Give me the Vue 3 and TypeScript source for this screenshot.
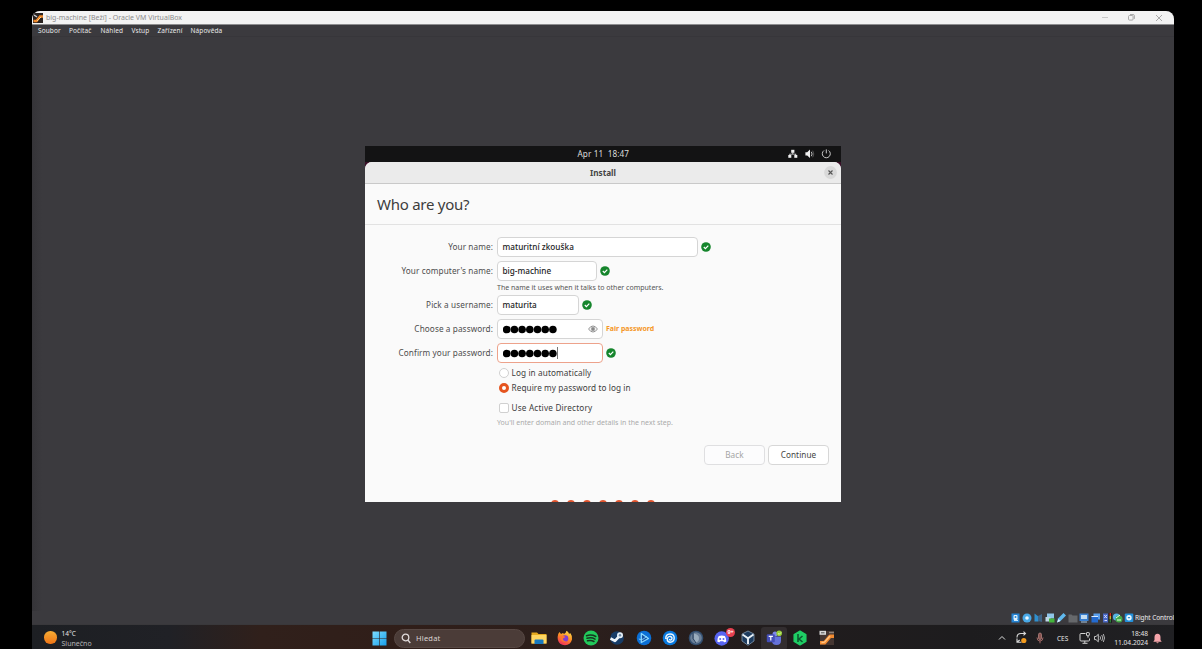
<script setup lang="ts">
const menu: { label: string; width: number }[] = [
  { label: 'Soubor', width: 31 },
  { label: 'Počítač', width: 31.5 },
  { label: 'Náhled', width: 31 },
  { label: 'Vstup', width: 26 },
  { label: 'Zařízení', width: 33 },
  { label: 'Nápověda', width: 40 },
]
const progressDots = [0, 1, 2, 3, 4, 5, 6]
const bullets = [0, 1, 2, 3, 4, 5, 6]
</script>

<template>
  <div class="screen">
    <div class="window">
      <header class="titlebar">
        <svg class="app-icon" width="10" height="10" viewBox="0 0 10 10">
          <rect width="10" height="10" fill="#2a2321" />
          <path d="M.5 8h3L7 3.5h3" stroke="#f08a2c" stroke-width="2.4" fill="none" />
          <path d="M1 2l3 2" stroke="#c8cdd2" stroke-width="1.5" />
          <path d="M4 8l4-4" stroke="#ffd08a" stroke-width="1" />
        </svg>
        <span class="title">big-machine [Beží] - Oracle VM VirtualBox</span>
        <svg class="win-controls" width="64" height="12" viewBox="0 0 64 12" fill="none" stroke="#a2a2a2" stroke-width="0.9">
          <path d="M0 5.5h6" stroke="#c4c4c4" />
          <rect x="26.5" y="3.5" width="4.6" height="4.6" rx="1" />
          <path d="M28 2.5h3q1.4 0 1.4 1.4v3" />
          <path d="M54 3l6 6M60 3l-6 6" />
        </svg>
      </header>
      <nav class="menubar">
        <span v-for="m in menu" :key="m.label" :style="{ width: m.width + 'px' }">{{ m.label }}</span>
      </nav>

      <main class="stage">
        <section class="vm">
          <div class="topbar">
            <span class="clock">Apr 11&nbsp; 18:47</span>
            <svg class="sys" width="44" height="10" viewBox="0 0 44 10">
              <g fill="#f0f0f0">
                <rect x="3.2" y="0.8" width="3.2" height="3" />
                <rect x="0.3" y="6" width="3" height="2.8" />
                <rect x="6.3" y="6" width="3" height="2.8" />
                <path d="M4.4 3.5h.8v1.2h3v1.5h-.8v-.7H2.2v.7h-.8V4.7h3z" />
                <path d="M17.4 3.2h1.8L22 .6v8.4L19.2 6.6h-1.8z" />
              </g>
              <path d="M23.3 2.8q1.6 2.2 0 4.4" stroke="#d5d5d5" fill="none" stroke-width=".9" />
              <path d="M24.7 1.7q2.2 3.3 0 6.6" stroke="#666" fill="none" stroke-width=".8" />
              <path d="M36 1.500a4 4 0 1 0 4.600 0M38.300 .4v4" stroke="#c9c9c9" fill="none" stroke-width="1" />
            </svg>
          </div>
          <div class="dialog">
            <div class="dialog-head">
              <span>Install</span>
              <svg class="close" width="13" height="13" viewBox="0 0 13 13">
                <circle cx="6.5" cy="6.5" r="6.4" fill="#d9d9d9" />
                <path d="M4.5 4.5l4 4M8.5 4.5l-4 4" stroke="#555" stroke-width="1.1" />
              </svg>
            </div>
            <h1><span>Who are you?</span></h1>
            <div class="form">
              <div class="row">
                <label>Your name:</label>
                <div class="field f-name"><span>maturitní zkouška</span></div>
                <svg class="ok" viewBox="0 0 10 10"><circle cx="5" cy="5" r="4.8" fill="#15852c" /><path d="M2.8 5l1.6 1.6 2.9-3" /></svg>
              </div>
              <div class="row">
                <label>Your computer's name:</label>
                <div class="field f-comp"><span>big-machine</span></div>
                <svg class="ok" viewBox="0 0 10 10"><circle cx="5" cy="5" r="4.8" fill="#15852c" /><path d="M2.8 5l1.6 1.6 2.9-3" /></svg>
              </div>
              <p class="help">The name it uses when it talks to other computers.</p>
              <div class="row">
                <label>Pick a username:</label>
                <div class="field f-user"><span>maturita</span></div>
                <svg class="ok" viewBox="0 0 10 10"><circle cx="5" cy="5" r="4.8" fill="#15852c" /><path d="M2.8 5l1.6 1.6 2.9-3" /></svg>
              </div>
              <div class="row">
                <label>Choose a password:</label>
                <div class="field f-pass">
                  <svg class="bullets" width="55" height="10" viewBox="0 0 55 10"><circle v-for="b in bullets" :key="b" :cx="3.7 + b * 7.7" cy="5.5" r="3.8" /></svg>
                  <svg class="eye" width="10" height="8" viewBox="0 0 10 8" fill="none" stroke="#858585">
                    <path d="M.6 4Q2.4 1 5 1t4.400 3Q7.6 7 5 7T.6 4z" stroke-width=".9" />
                    <circle cx="5" cy="4" r="1.9" fill="#888" stroke="#aaa" stroke-width=".6" />
                  </svg>
                </div>
                <span class="fair">Fair password</span>
              </div>
              <div class="row">
                <label>Confirm your password:</label>
                <div class="field f-pass focus">
                  <svg class="bullets" width="55" height="10" viewBox="0 0 55 10"><circle v-for="b in bullets" :key="b" :cx="3.7 + b * 7.7" cy="5.5" r="3.8" /></svg><i class="caret"></i>
                </div>
                <svg class="ok" viewBox="0 0 10 10"><circle cx="5" cy="5" r="4.8" fill="#15852c" /><path d="M2.8 5l1.6 1.6 2.9-3" /></svg>
              </div>
              <div class="option"><i class="radio"></i><span class="o-auto">Log in automatically</span></div>
              <div class="option"><i class="radio on"></i><span class="o-req">Require my password to log in</span></div>
              <div class="option ad"><i class="check"></i><span class="o-ad">Use Active Directory</span></div>
              <p class="hint">You'll enter domain and other details in the next step.</p>
            </div>
            <div class="buttons">
              <button class="back">Back</button>
              <button>Continue</button>
            </div>
            <div class="dots"><i v-for="d in progressDots" :key="d"></i></div>
          </div>
        </section>
      </main>

      <div class="statusbar">
        <svg width="127" height="12" viewBox="0 0 127 12">
          <rect x="1.5" y="1.5" width="8" height="9" fill="#2584d4" /><rect x="3.5" y="3" width="4" height="5" rx="1" fill="#e6f4fb" /><circle cx="5.5" cy="5" r="1" fill="#2584d4" /><path d="M4 8.5h4" stroke="#cceaff" />
          <circle cx="17" cy="6" r="4.5" fill="#49a9e7" /><circle cx="17" cy="6" r="1.8" fill="#eaf7ff" />
          <path d="M24.5 1.5l4 3v5h-4z" fill="#2f8fce" /><path d="M28 4l4-2v8l-4-1z" fill="#3f6588" />
          <rect x="37" y="1.5" width="7" height="5" fill="#8fc6e8" /><rect x="35.5" y="5" width="5" height="4.5" fill="#bcd7e6" /><path d="M39 6.5h5.500v4H39z" fill="#44b53c" />
          <path d="M47 10.5l1-4L53.5 1l2.5 2.5-5.500 5.500z" fill="#60b9ee" /><path d="M47 10.5l1.5-3.5 2 2z" fill="#e1f3ff" />
          <path d="M58.5 2.5h3l1 1h5v7h-9z" fill="#66686b" />
          <rect x="69.5" y="1.5" width="9" height="7.5" fill="#397fd0" /><rect x="71" y="3" width="6" height="4" fill="#c3dcf2" /><path d="M71 10h6" stroke="#a5c8e8" />
          <rect x="83.5" y="1.5" width="6.5" height="6" fill="#5a9fed" /><rect x="81.5" y="4" width="6.5" height="6.5" fill="#246bd1" /><path d="M81.5 4.5H88" stroke="#d9eaff" />
          <rect x="93" y="1.5" width="5" height="9" fill="#4a68c4" /><path d="M94.3 3l2.5 3M96.8 3l-2.5 3M94.5 8.5h2.5" stroke="#d5dcff" />
          <rect x="98.7" y="1" width="3.2" height="9.8" fill="#151515" />
          <rect x="99.5" y="1" width="1.6" height="3" fill="#d62b20" /><rect x="99.5" y="4" width="1.6" height="3.5" fill="#c9a72a" /><rect x="99.5" y="7.5" width="1.6" height="3" fill="#287b35" />
          <circle cx="106.5" cy="5" r="3.6" fill="#55b3e6" /><circle cx="109" cy="7" r="3.5" fill="#43ab48" /><path d="M106 6l4-3M107 8h4" stroke="#e4ffe4" />
          <rect x="114.8" y="1.5" width="8.5" height="8.5" rx="1" fill="#2491dc" /><circle cx="119" cy="5.7" r="2.7" fill="#ebf8ff" /><path d="M117.6 5h2.8l-1.4 1.800z" fill="#2482c8" />
        </svg>
        <span>Right Control</span>
      </div>

      <footer class="taskbar">
        <div class="weather">
          <i class="sun"></i>
          <div class="wtext"><span>14°C</span><span class="cond">Slunečno</span></div>
        </div>
        <svg class="start" width="15" height="15" viewBox="0 0 15 15">
          <defs><linearGradient id="win" x2="1" y2="1"><stop stop-color="#7ddcff" /><stop offset="1" stop-color="#169eea" /></linearGradient></defs>
          <path d="M.5 .5h6.7v6.7H.5zM7.8 .5h6.7v6.7H7.8zM.5 7.8h6.7v6.7H.5zM7.8 7.8h6.7v6.7H7.8z" fill="url(#win)" />
        </svg>
        <div class="search">
          <svg width="10" height="11" viewBox="0 0 10 11" fill="none" stroke="#e0dada" stroke-width="1.3"><circle cx="4.5" cy="4.5" r="3.3" /><path d="M6.8 7l2.5 3" /></svg>
          <span>Hledat</span>
        </div>
        <div class="apps">
          <div class="app"><svg viewBox="0 0 16 16"><path d="M.5 2.5h5.5l1.5 1.5h8V13.5H.5z" fill="#e6a91f" /><path d="M.5 5h15v8.500H.5z" fill="#ffd662" /><path d="M3.5 14v-3.5q0-1 1-1h7q1 0 1 1V14z" fill="#1679c0" /></svg></div>
          <div class="app run"><svg viewBox="0 0 16 16"><defs><linearGradient id="fx" x1=".8" x2=".3" y2="1"><stop stop-color="#ffe14d" /><stop offset=".5" stop-color="#ff8a22" /><stop offset="1" stop-color="#f02c5f" /></linearGradient></defs><path d="M1.2 4l1.3-2 1.5 2 2-1 1 1Q9 3 9.5 .8q2 1 2.5 3l1.5-.5Q15.5 6 15 9.5 13.5 15 8 15.2 2 15 .8 9.5q-.4-3 .4-5.5z" fill="url(#fx)" /><circle cx="8" cy="8.5" r="3.3" fill="#813fd0" /><path d="M3 6q3-1 5.500 1L6 8.500q0 3 3.500 2.700Q6.500 13 4 10z" fill="#ff762e" /></svg></div>
          <div class="app run"><svg viewBox="0 0 16 16"><circle cx="8" cy="8" r="7.5" fill="#22ca5b" /><path d="M3.5 5.700q5-1.500 9.300 .8M4 8.300q4.500-1.200 8 .8M4.500 10.800q3.700-.9 6.500 .7" fill="none" stroke="#17351f" stroke-width="1.5" stroke-linecap="round" /></svg></div>
          <div class="app"><svg viewBox="0 0 16 16"><circle cx="8" cy="8" r="6.8" fill="#173c67" /><path d="M1.5 8.500l4.500 2.300 4.500-4.800" stroke="#edf4fa" stroke-width="2.6" fill="none" stroke-linejoin="round" /><circle cx="11" cy="5.3" r="3" fill="#e4eef6" /><circle cx="11" cy="5.3" r="1.2" fill="#6d88a3" /></svg></div>
          <div class="app"><svg viewBox="0 0 16 16"><circle cx="8" cy="8" r="7.3" fill="#0b6fd6" /><path d="M5.300 3.500v9L12.500 8.500z" stroke="#8bd8ff" fill="#1653a5" stroke-width="1.3" stroke-linejoin="round" /><path d="M2.800 9q4 2 8-3" stroke="#8bd8ff" fill="none" stroke-width=".9" /></svg></div>
          <div class="app"><svg viewBox="0 0 16 16"><circle cx="8" cy="8" r="7.3" fill="#0879df" /><path d="M3.800 9Q3.500 4 8 4q4.200 0 4.200 4T8 12.200q-3.200-.5-2.700-3.700Q6 6 8.500 6.500q2.400 1 1 3.200-1.500 1-2.200-.7" fill="none" stroke="#eef8ff" stroke-width="1.4" /></svg></div>
          <div class="app"><svg viewBox="0 0 16 16"><circle cx="8" cy="8" r="7.3" fill="#334f70" /><circle cx="8" cy="8" r="5.8" fill="#6b7f97" /><path d="M6 3.500q5 1 5 4.500t-3 4.500q-3-1-2-4.500z" fill="#9aacbd" /><path d="M5 3Q3.500 9 8 13" stroke="#28405e" fill="none" /></svg></div>
          <div class="app run"><svg viewBox="0 0 16 16"><circle cx="7.7" cy="8.5" r="7.2" fill="#5865f2" /><path d="M3.300 11.500q0-4 1.500-5.500 3-1.200 6 0 1.600 2 1.500 5.500-1 1-2.300 .8l-.7-1H6.200l-.7 1q-1.500 0-2.200-.8z" fill="#fff" /><circle cx="6.2" cy="9" r="1" fill="#5865f2" /><circle cx="9.5" cy="9" r="1" fill="#5865f2" /></svg><b class="badge">9+</b></div>
          <div class="app run"><svg viewBox="0 0 16 16"><path d="M8 1l6 3v7l-6 4.300L2 11V4z" fill="#1d3b5e" stroke="#8299b0" stroke-width=".8" /><path d="M2.500 4.500L8 8.300l5.500-3.800M8 8v6" stroke="#e8eff4" stroke-width="1.9" fill="none" /></svg></div>
          <div class="app active"><svg viewBox="0 0 16 16"><circle cx="9" cy="4" r="2.5" fill="#7d86e8" /><path d="M6 6.500h9v4q0 4.500-4.500 4.500T6 11z" fill="#6572d9" /><rect x=".8" y="4.3" width="8" height="8" rx="1" fill="#444eb8" /><path d="M2.700 6.300h4.200M4.800 6.300v4.300" stroke="#fff" stroke-width="1.2" /><circle cx="13.2" cy="3.3" r="2.8" fill="#95cc38" /><path d="M12 3.300l1.200 1.100 1.800-2" stroke="#eaffc8" stroke-width=".8" fill="none" /></svg></div>
          <div class="app run"><svg viewBox="0 0 16 16"><path d="M8 1.200l5.800 3.400v6.800L8 14.800l-5.800-3.400V4.600z" fill="#1fce65" stroke="#1fce65" stroke-width="1.5" stroke-linejoin="round" /><path d="M6 4v8M10.500 6L7 9l3.500 3" stroke="#0c5b30" stroke-width="1.6" fill="none" /></svg></div>
          <div class="app run"><svg viewBox="0 0 16 16"><rect x="1" y="1" width="14" height="14" fill="#453632" /><path d="M1 12.800h4.500L11 6.300h4" stroke="#f28b32" stroke-width="3.6" fill="none" stroke-linejoin="round" /><path d="M2.500 12.500l3-.3L11 6" stroke="#ffc583" stroke-width="1.3" fill="none" /><rect x=".5" y=".8" width="6.5" height="4" fill="#d8d8d8" /><path d="M2 2.800h3.500" stroke="#555" /><path d="M10 2.500h5" stroke="#8b8078" stroke-width="1.5" /></svg></div>
        </div>
        <div class="tray">
          <svg width="50" height="14" viewBox="0 0 50 14" fill="none">
            <path d="M1 8.500l3-3 3 3" stroke="#ddd" />
            <path d="M19 6.500q0-4 4-4h4M25.500 .6l2 1.900-2 1.900M19 7.500v3.700h4.500M19.200 11l2.500-2" stroke="#d9d9d9" stroke-width="1.1" />
            <circle cx="25.8" cy="9.5" r="2.6" fill="#f39b1e" />
            <rect x="40.5" y="2" width="3" height="6.5" rx="1.5" fill="#8a5450" stroke="#bd8b86" stroke-width=".7" />
            <path d="M39 6.500q0 3.500 3 3.500t3-3.500M42 10v2.300" stroke="#a56b68" />
          </svg>
          <span class="lang">CES</span>
          <svg class="net" width="27" height="14" viewBox="0 0 27 14" fill="none" stroke="#d3d3d3">
            <path d="M6.500 2.500H2q-1 0-1 1v5.500q0 1 1 1h7.500q1 0 1-1V7.500M5.800 10v2M3.500 12.300h5" />
            <rect x="7.5" y="1.5" width="2.8" height="3.2" rx=".6" /><path d="M9 4.700v2" />
            <path d="M15.500 5.500h1.500l2.300-2.200v7.500L17 8.600h-1.500z" stroke-width=".9" /><path d="M21 5.300q1.200 1.700 0 3.500M22.700 4q2.200 3 0 6M24.300 3q2.500 4 0 8" stroke-width=".8" />
          </svg>
          <div class="time"><span>18:48</span><span class="date">11.04.2024</span></div>
          <svg class="bell" width="9" height="11" viewBox="0 0 9 11"><path d="M1.500 7V4.300q0-3.500 3-3.500t3 3.500V7L8.700 8.700H.3zM3.200 9.300h2.600q-1.300 1.700-2.600 0z" fill="#f5a5ab" /></svg>
        </div>
      </footer>
    </div>
  </div>
</template>

<style>
html, body { background: #000; overflow: hidden; }
</style>

<style scoped>
* { box-sizing: border-box; }
.screen { width: 1202px; height: 649px; background: #000; padding: 11px 28px 0 32px; font-family: "Noto Sans", "Open Sans", sans-serif; overflow: hidden; }
.window { height: 638px; display: flex; flex-direction: column; background: #3b3a3e; border-radius: 8px 8px 0 0; overflow: hidden; }
span, label { white-space: nowrap; }
.titlebar { height: 14px; flex: none; background: #f3f3f3; border-bottom: 1px solid #8d8d8f; display: flex; align-items: center; padding: 0 8px 0 1px; }
.app-icon { flex: none; margin-right: 3px; }
.title { font-size: 7px; color: #8c8c8c; line-height: 12px; margin-top: 1px; }
.win-controls { margin-left: auto; }
.menubar { height: 12px; flex: none; padding-left: 6px; display: flex; font: 6.5px/11px "Noto Sans", sans-serif; letter-spacing: .1px; color: #e8e8e8; border-bottom: 1px solid #37363a; }
.stage { flex: 1; display: flex; justify-content: center; align-items: flex-start; padding-top: 109px; background: linear-gradient(90deg, #353438 0, #3b3a3e 10px); }
.vm { width: 476px; height: 356px; background: #3a1028; display: flex; flex-direction: column; overflow: hidden; }
.topbar { height: 16px; flex: none; background: #131314; color: #ddd; display: flex; align-items: center; justify-content: flex-end; position: relative; padding-right: 9.5px; }
.clock { position: absolute; left: 212.5px; font-size: 8.2px; line-height: 14px; top: 1px; letter-spacing: .1px; }
.dialog { flex: 1; background: #fafafa; border-radius: 7px 7px 0 0; display: flex; flex-direction: column; overflow: hidden; }
.dialog-head { height: 22px; flex: none; background: #ebebeb; border-bottom: 1px solid #c9c9c9; display: flex; align-items: center; justify-content: center; font-weight: 700; font-size: 8.2px; color: #444; position: relative; }
.close { position: absolute; right: 4px; top: 4px; }
h1 { height: 41px; flex: none; margin: 0; padding-left: 12px; border-bottom: 1px solid #e2e2e2; display: flex; align-items: center; font-size: 15px; font-weight: 400; color: #3d3d3d; letter-spacing: -.25px; }
.form { padding-top: 12px; font-size: 8.2px; color: #4d4d4d; }
.row { height: 20px; margin-bottom: 4px; display: flex; align-items: center; }
.row label { width: 128px; display: flex; justify-content: flex-end; margin-right: 4px; line-height: 12px; flex: none; letter-spacing: .1px; }
.field { height: 20px; border: 1px solid #d5d5d5; border-radius: 4px; background: #fff; padding-left: 4.5px; display: flex; align-items: center; color: #1c1c1c; flex: none; margin-right: 3px; line-height: 12px; font-weight: 500; }
.f-name { width: 201px; margin-right: 3.4px; letter-spacing: .03px; }
.f-comp { width: 100px; }
.f-user { width: 82px; }
.f-pass { width: 106px; margin-right: 3px; }
.focus { border-color: #eda28b; }
.ok { width: 10px; height: 10px; fill: none; stroke: #fff; stroke-width: 1.2; }
.ok circle { stroke: none; }
.help { margin: -2px 0 0 132px; height: 12px; line-height: 10px; font-size: 7px; color: #555; white-space: nowrap; }
.bullets { flex: none; fill: #000; }
.caret { width: 1px; height: 12px; background: #777; margin-left: -1px; }
.eye { margin: 0 4px 0 auto; }
.fair { font-weight: 700; font-size: 7px; color: #f59727; line-height: 10px; letter-spacing: -.03px; }
.option { display: flex; align-items: center; height: 15px; margin-left: 134px; line-height: 12px; color: #3d3d3d; }
.row + .option { margin-top: -2px; }
.radio, .check { width: 10px; height: 10px; border: 1px solid #d0d0d0; background: #fff; border-radius: 50%; margin-right: 2.5px; flex: none; }
.radio.on { border: 3.5px solid #e5541f; }
.check { border-radius: 2px; }
.ad { margin-top: 5px; }
.o-auto { letter-spacing: .12px; }
.o-req { letter-spacing: .09px; }
.o-ad { letter-spacing: .19px; }
.hint { margin: 3px 0 0 132px; line-height: 10px; font-size: 7px; color: #aaa; white-space: nowrap; }
.buttons { margin-top: 17px; display: flex; justify-content: flex-end; gap: 3px; padding-right: 12px; }
button { width: 61px; height: 20px; padding: 0; border: 1px solid #d7d7d7; border-radius: 4px; background: #fff; font: 8.2px/12px "Noto Sans", sans-serif; color: #444; letter-spacing: .08px; }
.back { color: #a5a5a5; background: #fcfcfd; border-color: #dfdfe1; }
.dots { margin-top: auto; height: 2px; overflow: hidden; display: flex; gap: 8px; padding-left: 185.5px; }
.dots i { width: 8px; height: 8px; border-radius: 50%; background: #e0532c; flex: none; }
.statusbar { height: 13px; flex: none; display: flex; align-items: center; justify-content: flex-end; color: #eee; font-size: 6.5px; padding-right: 1px; letter-spacing: -.1px; }
.statusbar svg { flex: none; margin-right: -2px; }
.statusbar span { width: 38px; }
.taskbar { height: 25px; flex: none; border-top: 1px solid #39383b; background: linear-gradient(90deg, #1d1f23 0, #202126 12%, #30201b 20%, #301e19 33%, #2c1f1c 48%, #211c1d 65%, #1d1c1e 82%, #202023 100%); display: flex; align-items: center; color: #e6e6e6; }
.weather { display: flex; align-items: center; padding-left: 12px; width: 340px; flex: none; }
.sun { width: 12.5px; height: 12.5px; border-radius: 50%; background: linear-gradient(#f7ad34, #ef7416); margin: 1px 5px 0 0; }
.wtext { display: flex; flex-direction: column; font-size: 6.5px; line-height: 9.5px; padding-top: 3px; }
.cond { color: #b5b5b7; font-size: 7px; }
.start { flex: none; margin-top: 3px; }
.search { width: 131px; height: 19px; flex: none; border-radius: 10px; margin: 3px 0 0 7px; background: #4b3c38; border: 1px solid #574844; display: flex; align-items: center; padding: 0 0 1px 6px; color: #dcd5d3; font-size: 7.5px; gap: 5px; letter-spacing: .2px; }
.apps { display: flex; margin: 2px 0 0 1px; flex: none; }
.app { width: 26.15px; height: 23px; display: flex; align-items: center; justify-content: center; position: relative; }
.app svg { width: 16px; height: 16px; }
.active { background: #322d2f; border-radius: 3px; }
.active::after, .run::after { content: ""; position: absolute; bottom: 0; width: 3px; height: 1px; background: #999; }
.active::after { width: 9px; background: #d16378; }
.badge { position: absolute; right: 0; top: 1px; width: 9px; height: 9px; border-radius: 50%; background: #e64050; color: #fff; font-size: 5.5px; line-height: 9px; text-align: center; }
.tray { margin-left: auto; padding-right: 12px; display: flex; align-items: center; height: 24px; flex: none; margin-top: 2px; }
.lang { font-size: 6.5px; width: 13px; margin: 1px 9px 0 9px; }
.time { width: 42px; font-size: 6.6px; line-height: 9.5px; display: flex; flex-direction: column; align-items: flex-end; margin-right: 5px; }
</style>
